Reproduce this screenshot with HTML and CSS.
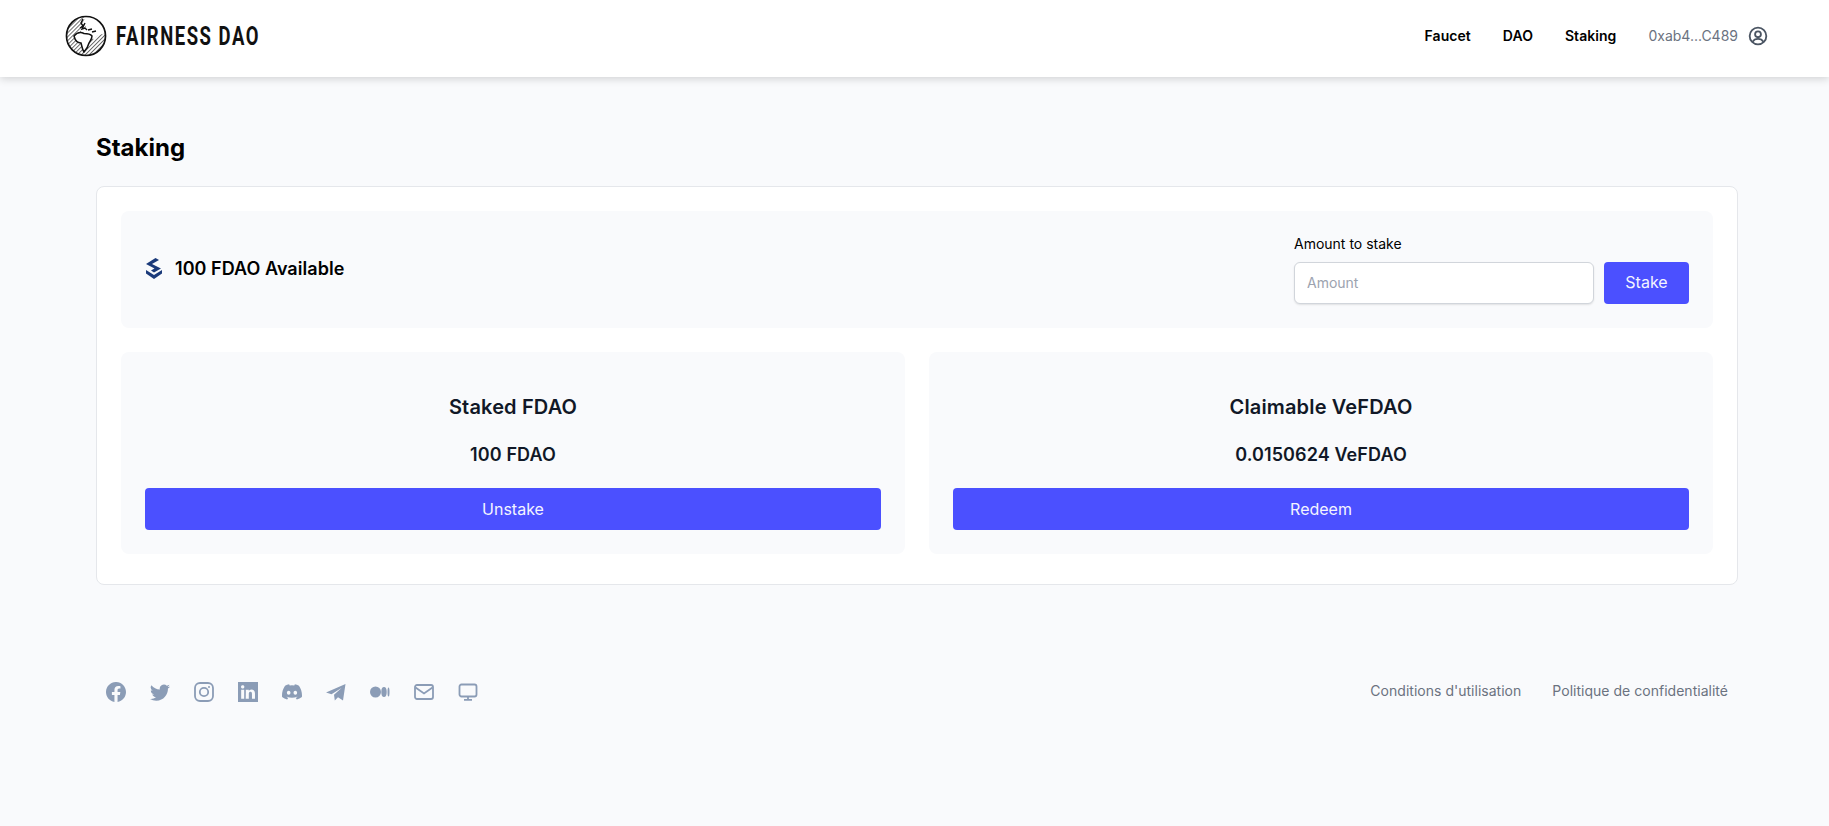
FILE: index.html
```html
<!DOCTYPE html>
<html>
<head>
    <title>Fairness DAO - Staking</title>
    <link rel="stylesheet" href="styles.css">
</head>
<body>
    <div class="header">
        <a class="logo">
            <svg class="logo-globe" viewBox="0 0 42 42">
                <defs>
                    <pattern id="hatch" width="2.800" height="2.800" patternUnits="userSpaceOnUse" patternTransform="rotate(45)">
                        <rect width="2.800" height="2.800" fill="#fff"/>
                        <line x1="0" y1="0" x2="0" y2="2.800" stroke="#111" stroke-width="1.200"/>
                    </pattern>
                </defs>
                <circle cx="21" cy="21" r="19.500" fill="url(#hatch)"/>
                <path d="M21 1.500C30 1 39 8 40.500 17L38 19C34 19 31 21 29 25L26 20C23 18 20 18 17 18L15 15 21 12 18 7Z" fill="#fff"/>
                <path d="M9 21C12 17.500 16 17 19 18.500 22 18.500 25 18.500 27 21 27 24 25 26 24 28 23 32 21 35 19 37 17 34 17 31 16 28 12.500 28 10 25 9 21Z" fill="#fff" stroke="#111" stroke-width="1.500"/>
                <path d="M18 4 16 8 18 11 15 13M20 8 17 14 20 13 22 15M23 15 27 14M27 17 31 16" fill="none" stroke="#111" stroke-width="1.400"/>
                <circle cx="21" cy="21" r="19.500" fill="none" stroke="#111" stroke-width="1.700"/>
            </svg>
            <span class="logo-text">FAIRNESS DAO</span>
        </a>
        <div class="nav">
            <a class="nav-link">Faucet</a>
            <a class="nav-link">DAO</a>
            <a class="nav-link">Staking</a>
            <span class="address">0xab4...C489</span>
            <svg class="account-icon" viewBox="0 0 24 24" fill="none" stroke="#4b5563" stroke-width="2.200">
                <circle cx="12" cy="12" r="10"/>
                <circle cx="12" cy="10" r="3.500"/>
                <path d="M5.500 19c1.500-2.600 3.700-3.500 6.500-3.500s5 .9 6.500 3.500"/>
            </svg>
        </div>
    </div>

    <div class="main">
        <h1 class="page-title">Staking</h1>
        <div class="card">
            <div class="panel stake-panel">
                <div class="available">
                    <svg class="layers-icon" viewBox="0 0 18 21" fill="#1b3a7a">
                        <path d="M10.500 0 14 2 7 6 16 10.500 9 14.500 6 12.500 9.500 10.500 1 6Z"/>
                        <path d="M1 12 9 17 17 12V15.500L9 21 1 15.500Z"/>
                    </svg>
                    <span>100 FDAO Available</span>
                </div>
                <div class="stake-form">
                    <label class="stake-label">Amount to stake</label>
                    <div class="stake-row">
                        <input class="amount-input" placeholder="Amount">
                        <button class="btn stake-btn">Stake</button>
                    </div>
                </div>
            </div>
            <div class="panel-grid">
                <div class="panel info-panel">
                    <div class="info-title">Staked FDAO</div>
                    <div class="info-value">100 FDAO</div>
                    <button class="btn wide-btn">Unstake</button>
                </div>
                <div class="panel info-panel">
                    <div class="info-title">Claimable VeFDAO</div>
                    <div class="info-value">0.0150624 VeFDAO</div>
                    <button class="btn wide-btn">Redeem</button>
                </div>
            </div>
        </div>
    </div>

    <div class="footer">
        <div class="socials">
            <svg class="social" viewBox="0 0 16 16" fill="#8b9cb6"><path d="M16 8.049c0-4.446-3.582-8.05-8-8.05C3.580 0-.002 3.603-.002 8.050c0 4.017 2.926 7.347 6.750 7.951v-5.625h-2.030V8.050H6.750V6.275c0-2.017 1.195-3.131 3.022-3.131.876 0 1.791.157 1.791.157v1.980h-1.009c-.993 0-1.303.621-1.303 1.258v1.510h2.218l-.354 2.326H9.250V16c3.824-.604 6.750-3.934 6.750-7.951z"/></svg>
            <svg class="social" viewBox="0 0 16 16" fill="#8b9cb6"><path d="M5.026 15c6.038 0 9.341-5.003 9.341-9.334 0-.14 0-.282-.006-.422A6.685 6.685 0 0 0 16 3.542a6.658 6.658 0 0 1-1.889.518 3.301 3.301 0 0 0 1.447-1.817 6.533 6.533 0 0 1-2.087.793A3.286 3.286 0 0 0 7.875 6.030a9.325 9.325 0 0 1-6.767-3.429 3.289 3.289 0 0 0 1.018 4.382A3.323 3.323 0 0 1 .64 6.575v.045a3.288 3.288 0 0 0 2.632 3.218 3.203 3.203 0 0 1-.865.115 3.230 3.230 0 0 1-.614-.057 3.283 3.283 0 0 0 3.067 2.277A6.588 6.588 0 0 1 .78 13.580a6.320 6.320 0 0 1-.78-.045A9.344 9.344 0 0 0 5.026 15z"/></svg>
            <svg class="social" viewBox="0 0 20 20" fill="none" stroke="#8b9cb6" stroke-width="1.800"><rect x="1" y="1" width="18" height="18" rx="5"/><circle cx="10" cy="10" r="4.200"/><circle cx="15" cy="5" r="1" fill="#8b9cb6" stroke="none"/></svg>
            <svg class="social" viewBox="0 0 16 16" fill="#8b9cb6"><path d="M0 0h16v16H0zm4.943 13.394V6.169H2.542v7.225h2.401zm-1.200-8.212c.837 0 1.358-.554 1.358-1.248-.015-.709-.52-1.248-1.342-1.248-.822 0-1.359.54-1.359 1.248 0 .694.521 1.248 1.327 1.248h.016zm4.908 8.212V9.359c0-.216.016-.432.08-.586.173-.431.568-.878 1.232-.878.869 0 1.216.662 1.216 1.634v3.865h2.401V9.250c0-2.220-1.184-3.252-2.764-3.252-1.274 0-1.845.7-2.165 1.193v.025h-.016a5.540 5.540 0 0 1 .016-.025V6.169h-2.400c.03.678 0 7.225 0 7.225h2.400z"/></svg>
            <svg class="social" viewBox="0 0 16 16" fill="#8b9cb6"><path d="M13.545 2.907a13.227 13.227 0 0 0-3.257-1.011.05.05 0 0 0-.052.025c-.141.25-.297.577-.406.833a12.190 12.190 0 0 0-3.658 0 8.258 8.258 0 0 0-.412-.833.051.051 0 0 0-.052-.025c-1.125.194-2.220.534-3.257 1.011a.041.041 0 0 0-.021.018C.356 6.024-.213 9.047.066 12.032c.001.014.01.028.021.037a13.276 13.276 0 0 0 3.995 2.020.05.05 0 0 0 .056-.019c.308-.42.582-.863.818-1.329a.05.05 0 0 0-.01-.059.051.051 0 0 0-.018-.011 8.875 8.875 0 0 1-1.248-.595.05.05 0 0 1-.02-.066.051.051 0 0 1 .015-.019c.084-.063.168-.129.248-.195a.05.05 0 0 1 .051-.007c2.619 1.196 5.454 1.196 8.041 0a.052.052 0 0 1 .053.007c.08.066.164.132.248.195a.051.051 0 0 1-.004.085 8.254 8.254 0 0 1-1.249.594.05.05 0 0 0-.03.03.052.052 0 0 0 .003.041c.24.465.515.909.817 1.329a.05.05 0 0 0 .056.019 13.235 13.235 0 0 0 4.001-2.020.049.049 0 0 0 .021-.037c.334-3.451-.559-6.449-2.366-9.106a.034.034 0 0 0-.02-.019zm-8.198 7.307c-.789 0-1.438-.724-1.438-1.612 0-.889.637-1.613 1.438-1.613.807 0 1.450.73 1.438 1.613 0 .888-.637 1.612-1.438 1.612zm5.316 0c-.788 0-1.438-.724-1.438-1.612 0-.889.637-1.613 1.438-1.613.807 0 1.451.73 1.438 1.613 0 .888-.631 1.612-1.438 1.612z"/></svg>
            <svg class="social" viewBox="0 0 20 20" fill="#8b9cb6"><path d="M0 10.500 19.500 2 17 18.500 12 15.200 8.800 18.500 8 12.800 15.500 6 5.500 12.300Z"/></svg>
            <svg class="social" viewBox="0 0 20 20" fill="#8b9cb6"><ellipse cx="5.500" cy="10" rx="5.500" ry="5.500"/><ellipse cx="14" cy="10" rx="2.700" ry="5.100"/><ellipse cx="18.500" cy="10" rx="1" ry="4.500"/></svg>
            <svg class="social" viewBox="0 0 20 20" fill="none" stroke="#8b9cb6" stroke-width="1.800"><rect x="1" y="3" width="18" height="14" rx="2"/><path d="M1.500 5.500 10 11.500 18.500 5.500"/></svg>
            <svg class="social" viewBox="0 0 20 20" fill="none" stroke="#8b9cb6" stroke-width="1.800"><rect x="1.500" y="2.500" width="17" height="12" rx="2"/><path d="M10 14.500V17.500M6 17.800H14"/></svg>
        </div>
        <div class="footer-links">
            <a class="footer-link">Conditions d'utilisation</a>
            <a class="footer-link">Politique de confidentialité</a>
        </div>
    </div>
</body>
</html>
```

FILE: styles.css
```css
* {
    box-sizing: border-box;
}
body {
    font-family: Inter, "Liberation Sans", sans-serif;
    margin: 0;
    min-height: 100vh;
    background-color: #f9fafc;
    color: #000;
}
.header {
    display: flex;
    justify-content: space-between;
    align-items: center;
    height: 77px;
    padding: 0 61px 6px 65px;
    background: white;
    box-shadow: 0 2px 8px rgba(0, 0, 0, 0.16);
}
.logo {
    display: flex;
    align-items: center;
    gap: 9px;
}
.logo-globe {
    width: 42px;
    height: 42px;
}
.logo-text {
    display: block;
    width: 142px;
    font-family: Roboto, sans-serif;
    font-size: 26px;
    font-weight: 700;
    letter-spacing: 2.15px;
    color: #111;
    white-space: nowrap;
    transform: scaleX(0.71);
    transform-origin: left center;
}
.nav {
    display: flex;
    align-items: center;
    font-size: 14px;
}
.nav-link {
    font-weight: 600;
    letter-spacing: 0.05px;
    margin-right: 32px;
}
.address {
    color: #6b7280;
    margin-right: 10px;
}
.account-icon {
    width: 20px;
    height: 20px;
}
.main {
    margin-left: 96px;
    width: 1642px;
    padding-top: 55px;
}
.page-title {
    margin: 0 0 22px;
    font-size: 24px;
    line-height: 32px;
    font-weight: 700;
}
.card {
    background: white;
    border: 1px solid #e5e7eb;
    border-radius: 8px;
    padding: 24px 24px 30px;
}
.panel {
    background-color: #f9fafc;
    border-radius: 8px;
}
.stake-panel {
    display: flex;
    justify-content: space-between;
    align-items: center;
    padding: 23px 24px 24px;
}
.available {
    display: flex;
    align-items: center;
    gap: 12px;
    margin-bottom: 2px;
    font-size: 18px;
    font-weight: 600;
    letter-spacing: 0.05px;
}
.layers-icon {
    width: 18px;
    height: 21px;
}
.stake-label {
    display: block;
    font-size: 14px;
    line-height: 20px;
    margin-bottom: 8px;
}
.stake-row {
    display: flex;
    gap: 10px;
}
.amount-input {
    width: 300px;
    height: 42px;
    padding: 0 12px 2px;
    border: 1px solid #d1d5db;
    border-radius: 6px;
    background: white;
    font-family: inherit;
    font-size: 14px;
    box-shadow: 0 1px 2px rgba(0, 0, 0, 0.1);
}
.amount-input::placeholder {
    color: #9ca3af;
}
.btn {
    height: 42px;
    border: none;
    border-radius: 4px;
    background-color: #4b50ff;
    color: #f3f4ff;
    font-family: inherit;
    font-size: 16px;
}
.stake-btn {
    width: 85px;
    padding-bottom: 3px;
}
.panel-grid {
    display: grid;
    grid-template-columns: 1fr 1fr;
    gap: 24px;
    margin-top: 24px;
}
.info-panel {
    padding: 41px 24px 24px;
    text-align: center;
}
.info-title {
    font-size: 20px;
    line-height: 28px;
    font-weight: 600;
    letter-spacing: 0.15px;
    color: #111827;
}
.info-value {
    margin-top: 20px;
    font-size: 18px;
    line-height: 28px;
    font-weight: 600;
    letter-spacing: 0.1px;
    color: #111827;
}
.wide-btn {
    display: block;
    width: 100%;
    margin-top: 19px;
}
.footer {
    display: flex;
    justify-content: space-between;
    align-items: center;
    margin: 95px 0 0 106px;
    width: 1622px;
}
.socials {
    display: flex;
    align-items: center;
    gap: 24px;
    padding-top: 2px;
}
.social {
    width: 20px;
    height: 20px;
}
.footer-links {
    display: flex;
    gap: 31px;
    padding-bottom: 2px;
    font-size: 14px;
    letter-spacing: 0.02px;
    color: #6b7280;
}
```
